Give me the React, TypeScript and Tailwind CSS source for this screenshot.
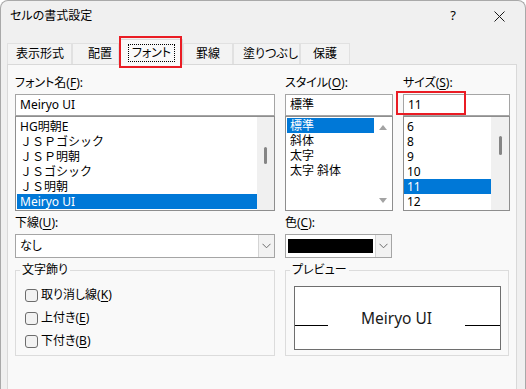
import React from "react";

const F = "font-['Noto_Sans','Noto_Sans_CJK_JP',sans-serif] [font-feature-settings:'palt']";

function M({ pre, k, post }: { pre: string; k: string; post: string }) {
  return (
    <span className="whitespace-nowrap">
      {pre}
      <span className="underline underline-offset-2">{k}</span>
      {post}
    </span>
  );
}

function Chevron() {
  return (
    <svg width="9" height="6" viewBox="0 0 9 6">
      <polyline points="0.5,0.8 4.5,4.8 8.5,0.8" fill="none" stroke="#6b6b6b" strokeWidth="1" />
    </svg>
  );
}

function Tab({ label, w, pl }: { label: string; w: string; pl: string }) {
  return (
    <div
      className={`${w} ${pl} shrink-0 whitespace-nowrap h-[21px] flex items-center bg-[#f3f3f3] border border-b-0 border-[#e1e1e1] leading-[16px]`}
    >
      {label}
    </div>
  );
}

function ListRow({ text, sel, wide }: { text: string; sel?: boolean; wide?: boolean }) {
  return (
    <div
      className={`h-[15px] leading-[15px] pl-[3px] whitespace-nowrap ${
        wide ? "[font-feature-settings:normal]" : ""
      } ${sel ? "bg-[#0078d7] text-white" : "text-black"}`}
    >
      {text}
    </div>
  );
}

function Check({ children }: { children: React.ReactNode }) {
  return (
    <div className="h-[16px] flex items-center gap-[3px]">
      <div className="w-[13px] h-[13px] rounded-[3px] border border-[#6c6c6c] bg-[#f2f2f2]" />
      <div className="leading-[16px]">{children}</div>
    </div>
  );
}

export default function App() {
  return (
    <div
      className={`relative w-[526px] h-[389px] overflow-hidden bg-[#f0f0f0] border border-b-0 border-[#a9a9a9] rounded-t-[8px] text-[12px] text-black ${F}`}
    >
      {/* title bar */}
      <div className="h-[30px] flex items-center pl-[9px] pr-[3px]">
        <div className="flex-1 leading-[16px]">セルの書式設定</div>
        <div className="w-[46px] text-center text-[13px]">?</div>
        <div className="w-[46px] flex justify-center">
          <svg width="11" height="11" viewBox="0 0 11 11">
            <path d="M0.5 0.5 L10.5 10.5 M10.5 0.5 L0.5 10.5" stroke="#1a1a1a" strokeWidth="1" />
          </svg>
        </div>
      </div>

      {/* tabs */}
      <div className="h-[33px] flex items-end pl-[6px]">
        <Tab label="表示形式" w="w-[65px]" pl="pl-[8px]" />
        <Tab label="配置" w="w-[47px]" pl="pl-[15px]" />
        <div className="relative z-10 -mb-px shrink-0 w-[64px] h-[26px] bg-[#f9f9f9] border border-b-0 border-[#d9d9d9] flex items-center pl-[8px]">
          <div className="w-[47px] h-[18px] border border-dotted border-black flex items-center justify-center whitespace-nowrap leading-[16px]">
            フォント
          </div>
        </div>
        <Tab label="罫線" w="w-[50px]" pl="pl-[12px]" />
        <Tab label="塗りつぶし" w="w-[67px]" pl="pl-[9px]" />
        <Tab label="保護" w="w-[50px]" pl="pl-[12px]" />
      </div>

      {/* panel */}
      <div className="ml-[6px] w-[510px] h-[340px] bg-[#f9f9f9] border border-[#d9d9d9] pl-[7px] pt-[10px]">
        <div className="flex gap-[10px]">
          {/* font name */}
          <div className="w-[260px]">
            <div className="h-[16px] leading-[16px] mb-[3px]">
              <M pre="フォント名(" k="F" post="):" />
            </div>
            <div className="h-[22px] border border-[#a5a5a5] bg-white flex items-center pl-[4px]">Meiryo UI</div>
            <div className="h-[95px] border border-[#8e8e8e] bg-white flex">
              <div className="flex-1 pt-[2px] pl-[1px]">
                <ListRow text="HG明朝E" />
                <ListRow text="ＪＳＰゴシック" wide />
                <ListRow text="ＪＳＰ明朝" wide />
                <ListRow text="ＪＳゴシック" wide />
                <ListRow text="ＪＳ明朝" wide />
                <ListRow text="Meiryo UI" sel />
              </div>
              <div className="w-[17px] bg-[#f0f0f0] pt-[30px] flex flex-col items-center">
                <div className="w-[3px] h-[17px] rounded-full bg-[#858585]" />
              </div>
            </div>
          </div>

          {/* style */}
          <div className="w-[108px]">
            <div className="h-[16px] leading-[16px] mb-[3px]">
              <M pre="スタイル(" k="O" post="):" />
            </div>
            <div className="h-[22px] border border-[#a5a5a5] bg-white flex items-center pl-[4px]">標準</div>
            <div className="h-[95px] border border-[#8e8e8e] bg-white flex">
              <div className="flex-1 pt-[1px] pl-[1px]">
                <ListRow text="標準" sel />
                <ListRow text="斜体" />
                <ListRow text="太字" />
                <ListRow text="太字 斜体" />
              </div>
              <div className="w-[18px] flex flex-col items-center justify-between pt-[8px] pb-[7px]">
                <svg width="8" height="5" viewBox="0 0 8 5">
                  <polygon points="0,5 8,5 4,0" fill="#a3a3a3" />
                </svg>
                <svg width="8" height="5" viewBox="0 0 8 5">
                  <polygon points="0,0 8,0 4,5" fill="#a3a3a3" />
                </svg>
              </div>
            </div>
          </div>

          {/* size */}
          <div className="w-[107px]">
            <div className="h-[16px] leading-[16px] mb-[3px]">
              <M pre="サイズ(" k="S" post="):" />
            </div>
            <div className="h-[22px] border border-[#a5a5a5] bg-white flex items-center pl-[4px]">11</div>
            <div className="h-[95px] border border-[#8e8e8e] bg-white flex">
              <div className="flex-1 pt-[2px]">
                <ListRow text="6" />
                <ListRow text="8" />
                <ListRow text="9" />
                <ListRow text="10" />
                <ListRow text="11" sel />
                <ListRow text="12" />
              </div>
              <div className="w-[18px] bg-[#f0f0f0] pt-[19px] flex flex-col items-center">
                <div className="w-[3px] h-[19px] rounded-full bg-[#858585]" />
              </div>
            </div>
          </div>
        </div>

        {/* underline / color */}
        <div className="mt-[4px] flex gap-[10px]">
          <div className="w-[260px]">
            <div className="h-[16px] leading-[16px] mb-[3px]">
              <M pre="下線(" k="U" post="):" />
            </div>
            <div className="h-[24px] border border-[#a5a5a5] bg-white flex">
              <div className="flex-1 flex items-center pl-[4px]">なし</div>
              <div className="w-[16px] bg-[#f2f2f2] border-l border-[#d4d4d4] flex items-center justify-center">
                <Chevron />
              </div>
            </div>
          </div>
          <div className="w-[107px]">
            <div className="h-[16px] leading-[16px] mb-[3px]">
              <M pre="色(" k="C" post="):" />
            </div>
            <div className="h-[24px] border border-[#a5a5a5] bg-white flex">
              <div className="flex-1 ml-[2px] mr-[2px] my-[4px] bg-black" />
              <div className="w-[16px] bg-[#f2f2f2] border-l border-[#d4d4d4] flex items-center justify-center">
                <Chevron />
              </div>
            </div>
          </div>
        </div>

        {/* groups */}
        <div className="mt-[4px] flex gap-[10px]">
          <fieldset className="w-[260px] h-[94px] border border-[#dcdcdc]">
            <legend className="ml-[4px] px-[2px] leading-[16px]">文字飾り</legend>
            <div className="flex flex-col gap-[7px] pl-[9px] pt-[9px]">
              <Check>
                <M pre="取り消し線(" k="K" post=")" />
              </Check>
              <Check>
                <M pre="上付き(" k="E" post=")" />
              </Check>
              <Check>
                <M pre="下付き(" k="B" post=")" />
              </Check>
            </div>
          </fieldset>
          <fieldset className="w-[224px] h-[94px] border border-[#dcdcdc]">
            <legend className="ml-[4px] px-[2px] leading-[16px]">プレビュー</legend>
            <div className="ml-[8px] mt-[8px] w-[207px] h-[64px] border border-[#6e6e6e] bg-white flex items-center">
              <div className="w-[33px] h-px bg-black mt-[14px]" />
              <div className="flex-1 text-center text-[15.5px] leading-[20px] text-[#1a1a1a]">Meiryo UI</div>
              <div className="w-[35px] h-px bg-black mt-[14px]" />
            </div>
          </fieldset>
        </div>
      </div>

      {/* red highlight boxes */}
      <div className="absolute left-[118px] top-[35px] w-[63px] h-[32px] border-2 border-[#ea1c24] z-20" />
      <div className="absolute left-[395px] top-[90px] w-[70px] h-[24px] border-2 border-[#ea1c24] z-20" />
    </div>
  );
}
